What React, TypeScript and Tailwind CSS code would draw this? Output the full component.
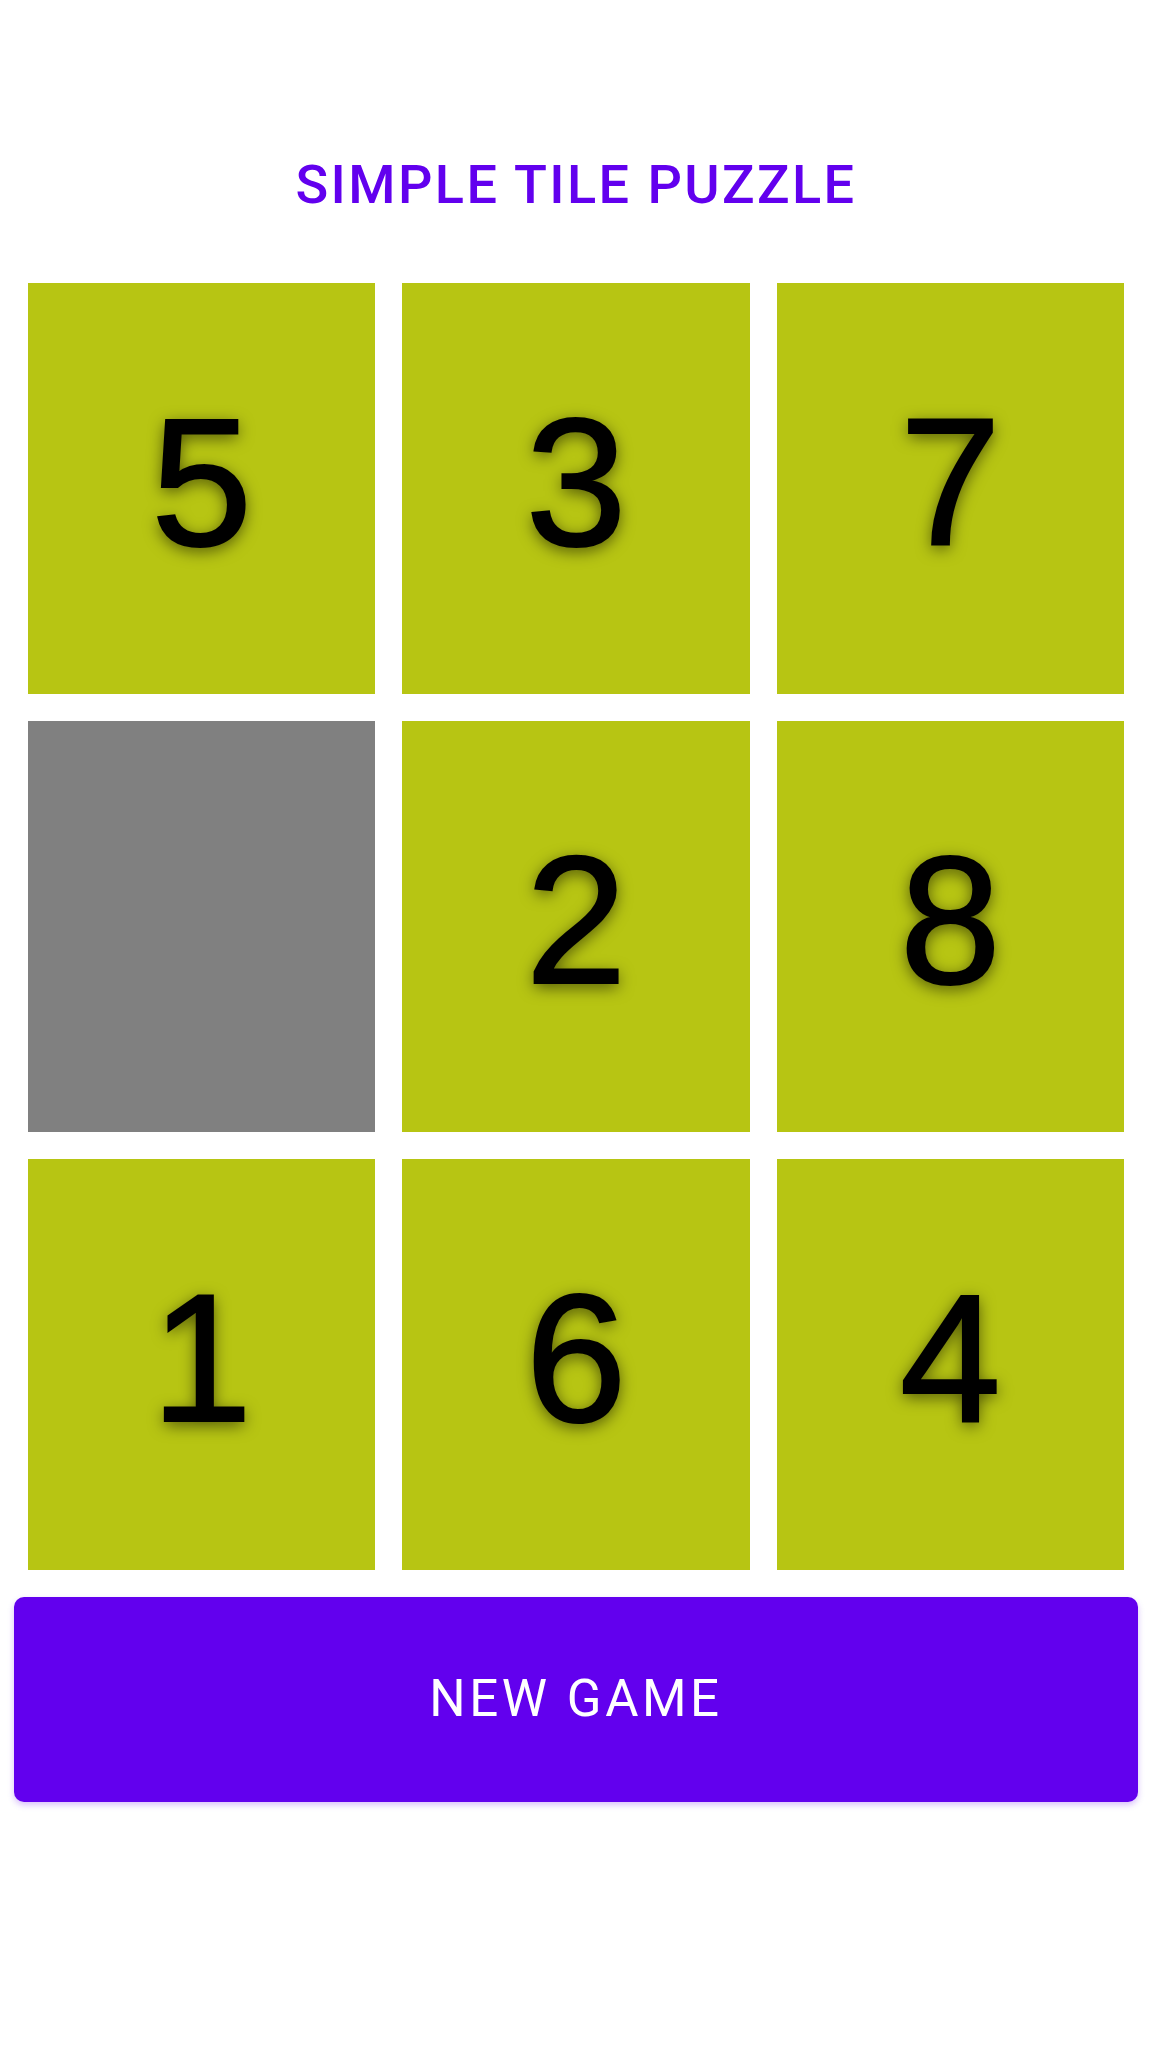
const tiles: (number | null)[] = [5, 3, 7, null, 2, 8, 1, 6, 4];

function Tile({ value }: { value: number | null }) {
  if (value === null) {
    return <div className="h-[411px] bg-[#808080]" />;
  }
  return (
    <div className="h-[411px] pb-[14px] bg-[#b7c513] flex items-center justify-center">
      <span className="font-['Liberation_Sans',Arial,sans-serif] text-[182px] leading-none text-black [-webkit-text-stroke:2px_black] [text-shadow:0_4px_16px_rgba(0,0,0,0.6)]">
        {value}
      </span>
    </div>
  );
}

export default function App() {
  return (
    <div className="w-full min-h-screen bg-white flex flex-col font-['Roboto',sans-serif]">
      {/* 제목 */}
      <h1 className="pt-[153px] text-center text-[54px] leading-[64px] font-medium tracking-[0.045em] text-[#6200ee]">
        SIMPLE TILE PUZZLE
      </h1>

      {/* 퍼즐 판 */}
      <div className="mt-[66px] px-[28px] grid grid-cols-3 gap-[27px]">
        {tiles.map((t, i) => (
          <Tile key={i} value={t} />
        ))}
      </div>

      <div className="px-[14px] mt-[27px]">
        <button
          type="button"
          className="w-full h-[205px] rounded-[10px] bg-[#6200ee] text-white text-[51px] tracking-[0.07em] shadow-[0_3px_6px_rgba(98,0,238,0.25)] hover:cursor-pointer"
        >
          NEW GAME
        </button>
      </div>
    </div>
  );
}
